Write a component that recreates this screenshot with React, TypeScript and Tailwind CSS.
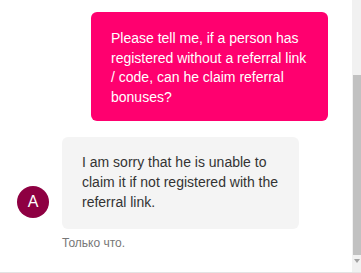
import React from 'react';

const App: React.FC = () => {
  return (
    <div className="flex h-[273px] w-[361px] overflow-hidden border-b border-[#e3e3e3] bg-white font-['Liberation_Sans',Arial,sans-serif]">
      <div className="flex flex-1 flex-col">
        {/* Outgoing message */}
        <div className="mt-[12px] flex justify-end pr-[24px]">
          <div className="w-[237px] rounded-[6px] bg-[#ff006f] px-[20px] pt-[17px] pb-[14px] text-[14px] leading-[19.6px] text-white">
            Please tell me, if a person has registered without a referral link / code, can he claim referral bonuses?
          </div>
        </div>

        {/* Incoming message */}
        <div className="mt-[16px] flex items-end gap-[13px] pl-[17px]">
          <div className="mb-[11px] flex h-[32px] w-[32px] items-center justify-center rounded-full bg-[#8e0042] text-[16px] text-white">
            A
          </div>
          <div className="w-[237px] rounded-[6px] bg-[#f4f4f4] px-[20px] pt-[16px] pb-[17px] text-[14px] leading-[19.6px] text-[#333]">
            I am sorry that he is unable to claim it if not registered with the referral link.
          </div>
        </div>
        <div className="mt-[7px] pl-[62px] text-[12px] leading-[14px] text-[#777]">Только что.</div>
      </div>

      {/* Scrollbar */}
      <div className="flex w-[9px] flex-col bg-[#f1f1f1]">
        <div className="ml-[1px] mt-[75px] h-[180px] bg-[#c1c1c1]" />
        <div className="mt-[4px] flex justify-center">
          <div className="h-0 w-0 border-x-[3px] border-t-[4px] border-x-transparent border-t-[#a3a3a3]" />
        </div>
      </div>
    </div>
  );
};

export default App;
